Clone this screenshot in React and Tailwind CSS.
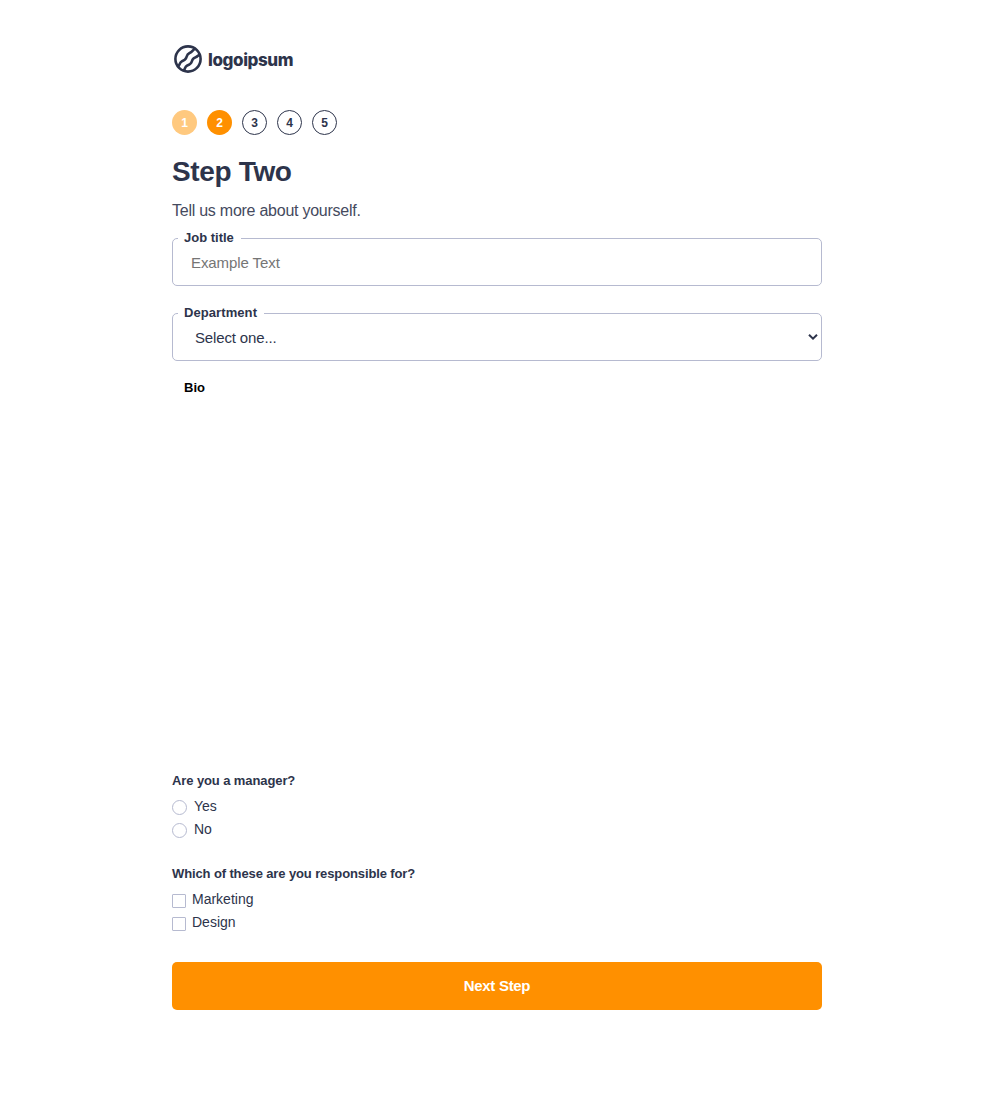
const steps = [
  { n: 1, style: "bg-[#ffc97f] text-white" },
  { n: 2, style: "bg-[#ff9000] text-white" },
  { n: 3, style: "border border-[#2d344b]" },
  { n: 4, style: "border border-[#2d344b]" },
  { n: 5, style: "border border-[#2d344b]" },
];

function Logo() {
  return (
    <div className="flex h-[30px] items-center pl-0.5">
      <svg className="h-7 w-7" viewBox="0 0 28 28" fill="none" stroke="#2d344b" strokeWidth="2.6" strokeLinejoin="round">
        <circle cx="14" cy="14" r="12.6" />
        <path d="M4.2 21.5C5.6 20.4 5.5 17.2 8 16.2C10.400 15.300 11.600 14.800 12.400 12.300C13 10.300 13.200 9 15.600 8C18.200 7 18.800 5 20.800 3.800" />
        <path d="M9.800 25.800C11 24.200 10.800 21.500 13.200 20.500C15.800 19.500 17.200 19 17.800 16.500C18.300 14.300 19 13 21.200 12.400C23.600 11.800 23.800 10.600 25.600 9.600" />
      </svg>
      <span className="ml-1.5 pt-px font-['Inter'] text-[17px] leading-[30px] font-extrabold tracking-[-0.4px]">logoipsum</span>
    </div>
  );
}

function Field({ label, className, children }) {
  return (
    <div className="relative h-12 rounded-[5px] border border-[#b6bad0]">
      <label className={`absolute -top-[9px] left-[5px] bg-white pl-1.5 text-[13px] leading-[15px] font-bold whitespace-nowrap ${className}`}>{label}</label>
      {children}
    </div>
  );
}

function Choice({ label, round }) {
  return (
    <label className="flex h-[23px] items-start text-[14px] leading-[18px]">
      <span className={round ? "mt-[3px] mr-[7px] h-[15px] w-[15px] rounded-full border border-[#b6bad0]" : "mt-[4px] mr-[6px] h-[14px] w-[14px] rounded-[1px] border border-[#b6bad0]"} />
      <span>{label}</span>
    </label>
  );
}

export default function App() {
  return (
    <main className="min-h-[1107px] bg-white pt-11 pl-[172px] font-['Liberation_Sans',sans-serif] text-[#2d344b]">
      <div className="flex w-[650px] flex-col">
        <Logo />
        <div className="mt-9 flex gap-2.5">
          {steps.map((s) => (
            <div key={s.n} className={`flex h-[25px] w-[25px] items-center justify-center rounded-full text-[12px] leading-none font-bold ${s.style}`}>{s.n}</div>
          ))}
        </div>
        <h1 className="mt-[21px] h-8 text-[28px] leading-8 font-bold tracking-[-0.35px]">Step Two</h1>
        <p className="mt-[13px] mb-[17px] h-5 text-[16px] leading-5 tracking-[-0.25px] text-[#454a5e]">Tell us more about yourself.</p>
        <Field label="Job title" className="w-[63px]">
          <div className="pl-[18px] text-[15px] leading-[48px] tracking-[-0.08px] text-[#757575]">Example Text</div>
        </Field>
        <div className="h-[27px]" />
        <Field label="Department" className="w-[86px] tracking-[0.08px]">
          <div className="flex items-center justify-between pr-[3px] pl-[22px] text-[15px] leading-[48px] tracking-[-0.15px]">
            <span>Select one...</span>
            <svg className="mb-[3px] h-[6px] w-[10px]" viewBox="0 0 10 6" fill="none" stroke="#2d344b" strokeWidth="2"><path d="M1 0.800L5 4.600L9 0.800" /></svg>
          </div>
        </Field>
        <h2 className="mt-[19px] h-[393px] pl-3 text-[13px] leading-[15px] font-bold text-black">Bio</h2>
        <h2 className="mb-[9px] text-[13px] leading-[15px] font-bold tracking-[-0.1px]">Are you a manager?</h2>
        <Choice round label="Yes" />
        <Choice round label="No" />
        <h2 className="mt-[23px] mb-[9px] text-[13px] leading-[15px] font-bold tracking-[-0.12px]">Which of these are you responsible for?</h2>
        <Choice label="Marketing" />
        <Choice label="Design" />
        <button className="mt-[26px] h-12 rounded-[5px] bg-[#ff9000] text-[15px] font-bold tracking-[-0.3px] text-white">Next Step</button>
      </div>
    </main>
  );
}
